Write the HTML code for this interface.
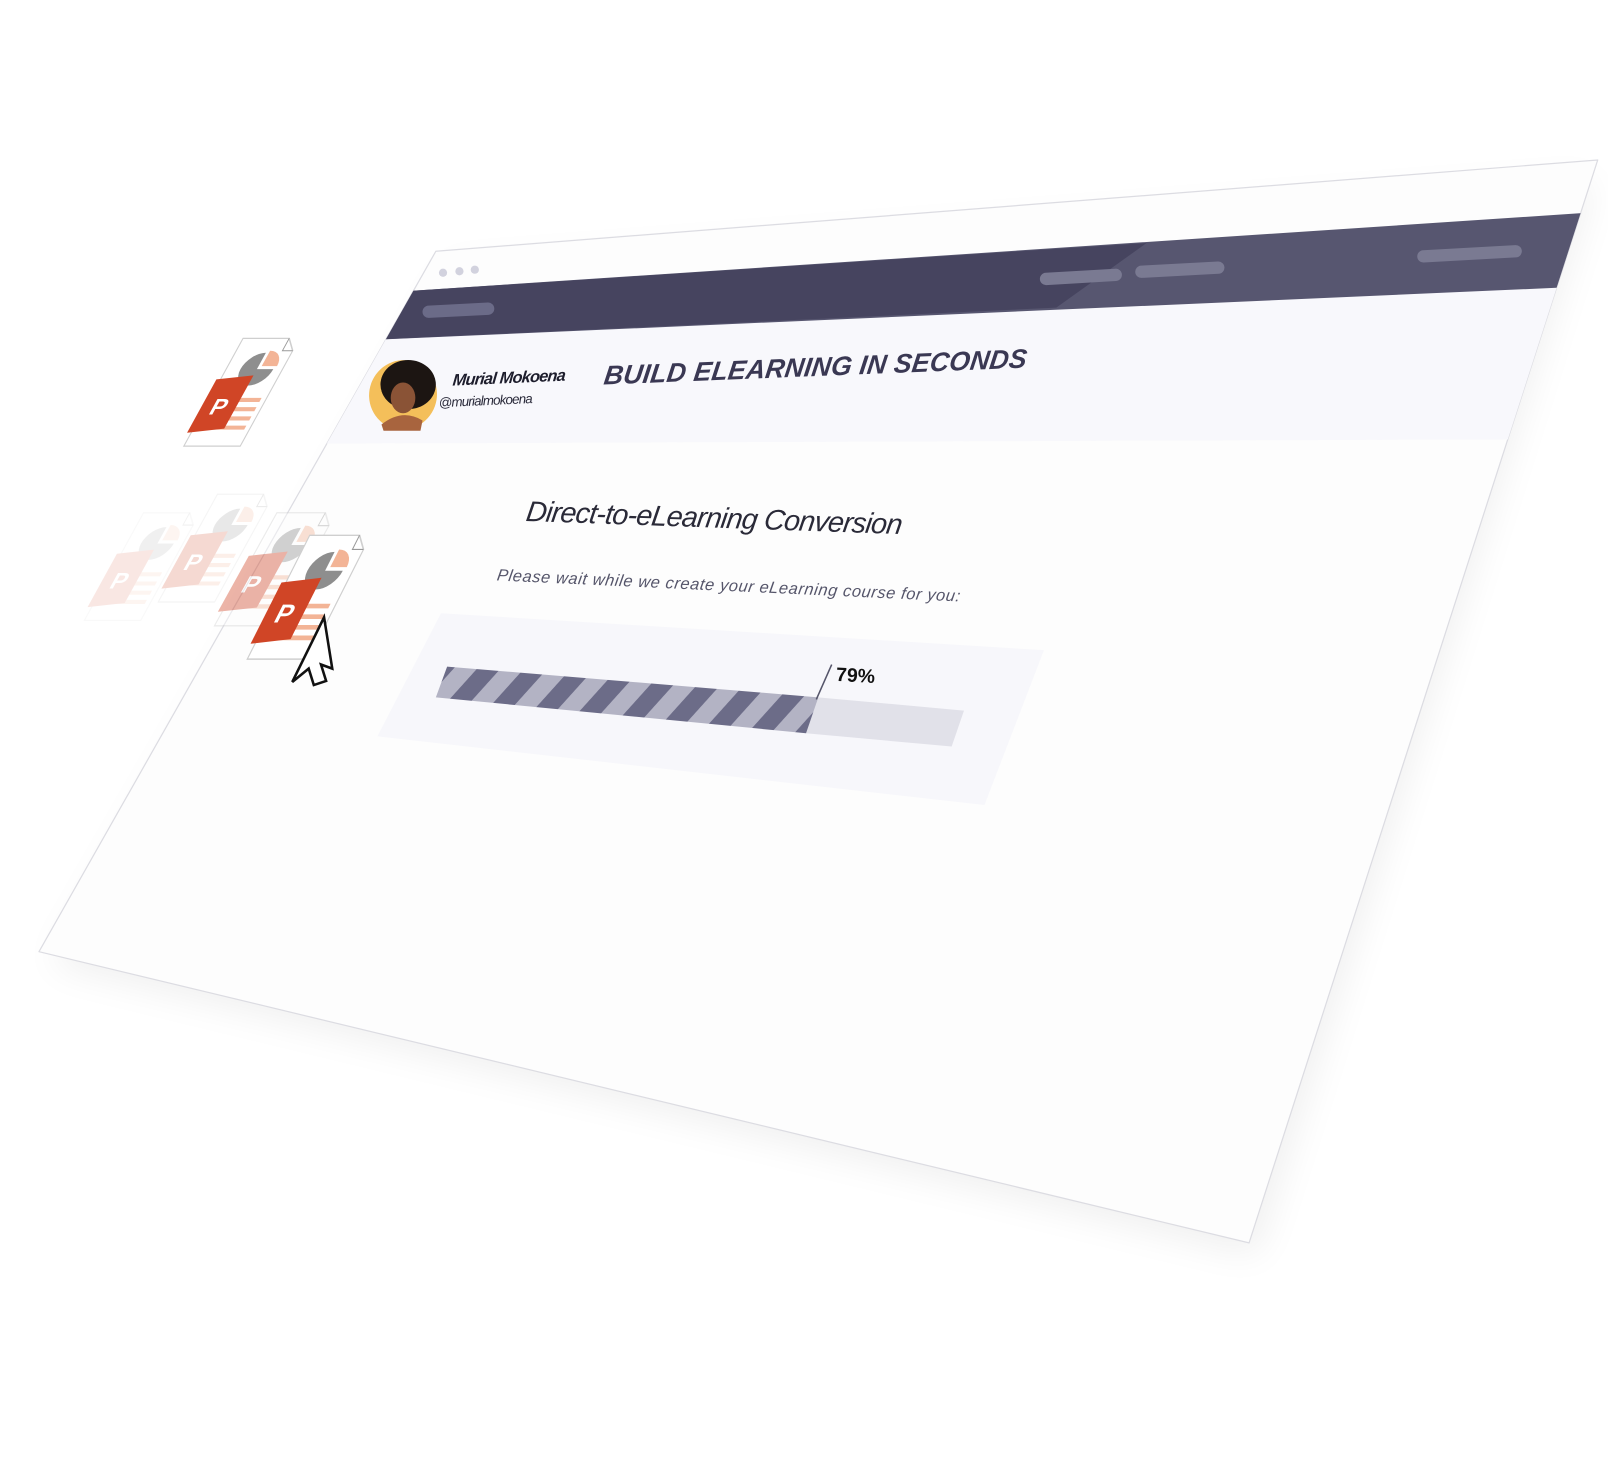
<!DOCTYPE html>
<html><head><meta charset="utf-8"><style>
html,body{margin:0;padding:0;background:#fff;width:1608px;height:1464px;overflow:hidden}
svg{display:block}
text{font-family:"Liberation Sans",sans-serif}
</style></head><body>
<svg width="1608" height="1464" viewBox="0 0 1568 1427.6" xmlns="http://www.w3.org/2000/svg">
<defs>
<filter id="sh" x="-10%" y="-10%" width="130%" height="130%"><feGaussianBlur stdDeviation="18"/></filter>
<pattern id="st" width="34" height="34" patternUnits="userSpaceOnUse" patternTransform="rotate(42)">
<rect width="34" height="34" fill="#b3b3c4"/><rect width="17" height="34" fill="#6c6c88"/></pattern>
<clipPath id="win"><polygon points="425,245 1558,156 1218,1212 38,928"/></clipPath>
<g id="ic">
<polygon points="0,0 45,0 55,12 55,105 0,105" fill="#fff" stroke="#cfcfcf" stroke-width="1.2"/>
<polyline points="45,0 45,12 55,12" fill="none" stroke="#999" stroke-width="1"/>
<path d="M30,30 L30,14 A16,16 0 1,0 46,30 Z" fill="#8e8e8e"/>
<path d="M33,27 L33,12 A15,15 0 0,1 48,27 Z" fill="#f3b496"/>
<rect x="18" y="58" width="32" height="4" fill="#f3b496"/>
<rect x="18" y="67" width="32" height="4" fill="#f3b496"/>
<rect x="18" y="76" width="32" height="4" fill="#f3b496"/>
<rect x="18" y="85" width="32" height="4" fill="#f3b496"/>
<polygon points="-4,40 30,36 30,88 -4,92" fill="#d04526"/>
<text x="6" y="74" font-size="22" font-weight="bold" fill="#fff">P</text>
</g>
</defs>

<polygon points="440,262 1555,176 1225,1225 50,940" fill="#000" opacity="0.06" filter="url(#sh)"/>
<polygon points="425,245 1558,156 1218,1212 38,928" fill="#fdfdfd" stroke="#dcdce2" stroke-width="1.2" stroke-linejoin="round"/>
<g clip-path="url(#win)">
<polygon points="300,331 1600,275 1600,428 200,433" fill="#f8f8fc"/>
<polygon points="380,285 1600,204 1600,277 350,332" fill="#575670"/>
<polygon points="380,285 1118,237 1030,300 350,332" fill="#46445f"/>
</g>
<circle cx="432" cy="266" r="4" fill="#d2d2de"/><circle cx="448" cy="264.5" r="4" fill="#d2d2de"/><circle cx="463" cy="263" r="4" fill="#d2d2de"/>
<g stroke-linecap="round" stroke-width="12">
<line x1="418" y1="304" x2="476" y2="301" stroke="#6b6b88"/>
<line x1="1020" y1="272" x2="1088" y2="268" stroke="#7a7a92"/>
<line x1="1113" y1="265" x2="1188" y2="261" stroke="#7a7a92"/>
<line x1="1388" y1="250" x2="1478" y2="245" stroke="#7a7a92"/>
</g>
<ellipse cx="393" cy="385" rx="33" ry="34" fill="#f4bf5a" transform="rotate(20 393 385)"/>
<ellipse cx="398" cy="375" rx="27" ry="24" fill="#1c1512"/>
<ellipse cx="393" cy="388" rx="12" ry="15" fill="#8a5336"/>
<path d="M372,414 Q392,398 412,410 L410,420 L374,420 Z" fill="#a8643e"/>
<text x="0" y="0" font-size="16" font-weight="bold" font-style="italic" fill="#1d1d2c" transform="translate(441,376) rotate(-2.5) skewX(-8)" letter-spacing="-0.8">Murial Mokoena</text>
<text x="0" y="0" font-size="13" font-style="italic" fill="#2a2a3a" transform="translate(428,397) rotate(-2.5)" letter-spacing="-0.8">@murialmokoena</text>
<text x="0" y="0" font-size="26" font-weight="bold" font-style="italic" fill="#3a3853" transform="translate(588,375) rotate(-2.3) skewX(-10)" letter-spacing="-0.5" textLength="412">BUILD ELEARNING IN SECONDS</text>
<text x="0" y="0" font-size="28" font-style="italic" fill="#2a2a38" transform="translate(512,508) rotate(2) skewX(-6)" textLength="366" letter-spacing="-1">Direct-to-eLearning Conversion</text>
<text x="0" y="0" font-size="16" font-style="italic" fill="#55556a" transform="translate(484,566) rotate(2.6) skewX(-6)" textLength="452">Please wait while we create your eLearning course for you:</text>
<polygon points="430,598 1018,634 960,785 368,718" fill="#f7f7fb"/>
<polygon points="798,680 940,693 928,728 786,715" fill="#e1e1e9"/>
<polygon points="436,650 798,680 786,715 425,680" fill="url(#st)"/>
<line x1="811" y1="648" x2="796" y2="682" stroke="#55556a" stroke-width="1.5"/>
<text x="0" y="0" font-size="19" font-weight="bold" fill="#111" transform="translate(815,664) rotate(3)">79%</text>
<g opacity="0.12" transform="translate(140,500) matrix(1,0,-0.55,1,0,0)"><use href="#ic"/></g>
<g opacity="0.2" transform="translate(212,482) matrix(1,0,-0.55,1,0,0)"><use href="#ic"/></g>
<g opacity="0.4" transform="translate(270,500) matrix(1.05,0,-0.58,1.05,0,0)"><use href="#ic"/></g>
<g transform="translate(237,330) matrix(1,0,-0.55,1,0,0)"><use href="#ic"/></g>
<g transform="translate(302,522) matrix(1.08,0,-0.58,1.15,0,0)"><use href="#ic"/></g>
<path d="M316,602 L324,652 L313,648 L318,664 L306,668 L301,652 L285,665 Z" fill="#fff" stroke="#111" stroke-width="2.5" stroke-linejoin="miter"/>
</svg>
</body></html>
